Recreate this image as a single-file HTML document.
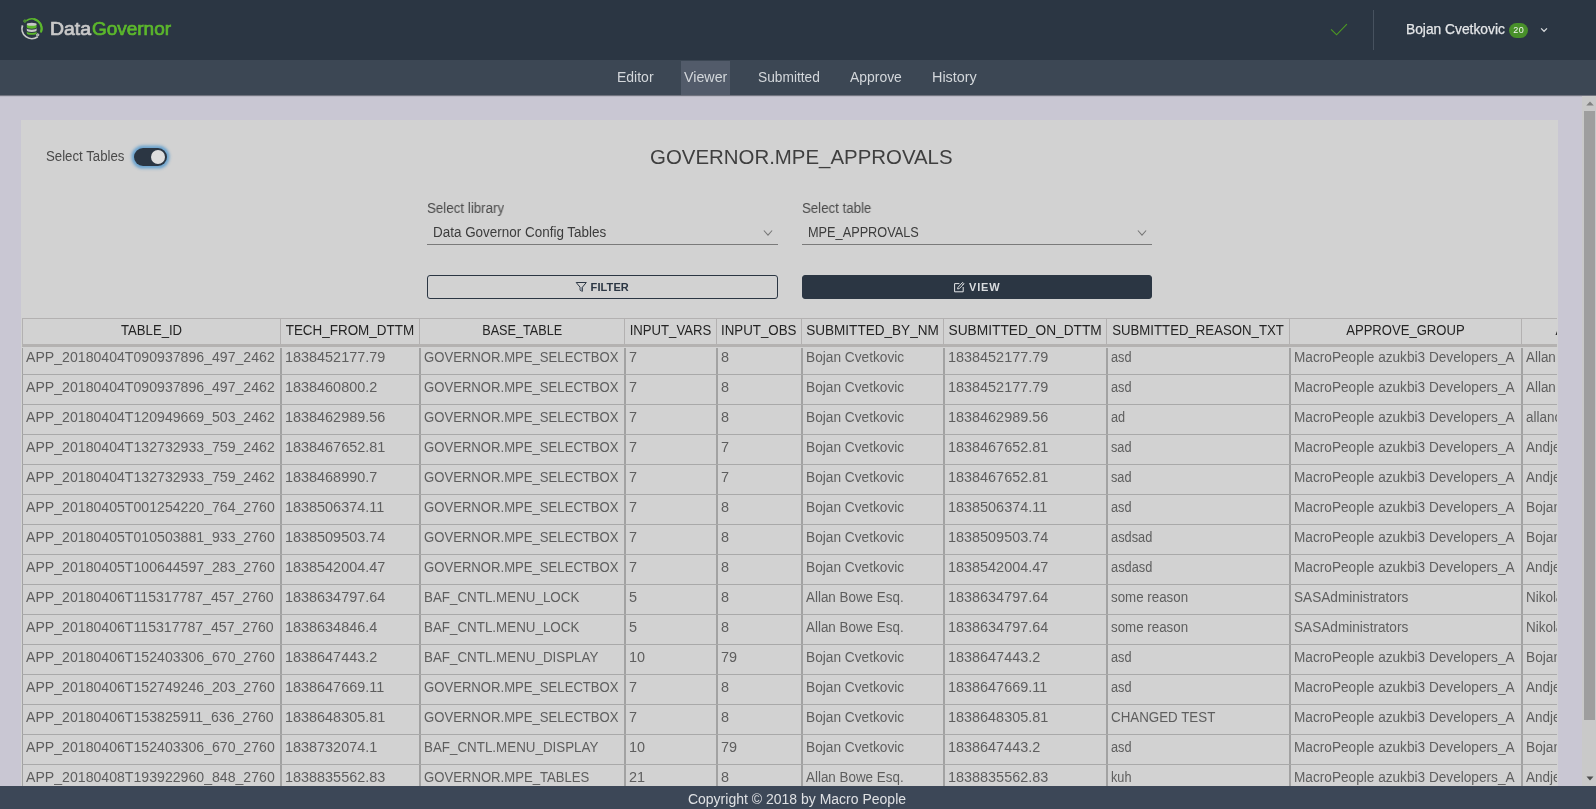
<!DOCTYPE html>
<html lang="en">
<head>
<meta charset="utf-8">
<title>DataGovernor - Viewer</title>
<style>
*{box-sizing:border-box}
html,body{margin:0;padding:0}
body{width:1596px;height:809px;overflow:hidden;position:relative;background:#c9c7d3;font-family:"Liberation Sans",sans-serif;font-size:14px;color:#565656}
.abs{position:absolute}
body>*{will-change:transform}
/* header */
#hdr{position:absolute;left:0;top:0;width:1596px;height:60px;background:#2b3643}
#logo{position:absolute;left:16px;top:12px;width:40px;height:34px}
#brand{position:absolute;left:50px;top:18px;height:22px;line-height:22px;font-size:18px;font-weight:normal;-webkit-text-stroke:.7px #c9c9c9;white-space:nowrap;color:#c9c9c9}
#brand span{display:inline-block;transform-origin:0 50%}
#brand b{display:inline-block;transform-origin:0 50%;color:#5cb82c;-webkit-text-stroke:.7px #5cb82c;font-weight:normal;position:absolute;left:42.1px;top:0}
#chk{position:absolute;left:1329px;top:20px;width:20px;height:18px}
#vdiv{position:absolute;left:1373px;top:10px;width:1px;height:40px;background:#47525f}
#user{position:absolute;left:1406px;top:20px;height:18px;line-height:18px;font-size:14px;color:#e4e6e8;-webkit-text-stroke:.25px #e4e6e8;white-space:nowrap;transform:scaleX(.985);transform-origin:0 50%}
#badge{position:absolute;left:1509px;top:23px;width:19px;height:15px;border-radius:8px;background:#48902a;color:#f4f4f4;font-size:9px;letter-spacing:.7px;padding-left:.7px;line-height:14px;text-align:center}
#caret{position:absolute;left:1539px;top:25px;width:10px;height:10px}
/* subnav */
#sub{position:absolute;left:0;top:60px;width:1596px;height:35px;background:#3c4754;box-shadow:0 1px 1px rgba(40,48,58,.55)}
#sub a{position:absolute;top:0;height:35px;line-height:35px;font-size:14px;color:#d3d7db;text-decoration:none;white-space:nowrap;transform-origin:0 50%}
#sub .act{position:absolute;left:681px;top:1px;width:49px;height:34px;background:#525b6a}
/* card */
#card{position:absolute;left:21px;top:120px;width:1537px;height:700px;background:#d2d2d2;overflow:hidden}
#card .lbl{position:absolute;white-space:nowrap;color:#4a4a4a;font-size:14px;line-height:18px;transform-origin:0 50%}
#title{position:absolute;left:650px;top:143px;font-size:20px;line-height:28px;color:#3f3f3f;white-space:nowrap;transform:scaleX(1.021);transform-origin:0 50%}
.sel{position:absolute;height:24px;border-bottom:1px solid #7a7a7a;font-size:14px;line-height:22px;color:#3c3c3c;padding-left:6px;white-space:nowrap}
.sel span{display:inline-block;transform-origin:0 50%}
.sel svg{position:absolute;right:5px;top:8px;width:10px;height:8px}
.fl{position:absolute;color:#4a4a4a;line-height:18px;white-space:nowrap;transform-origin:0 50%}
.btn{position:absolute;height:24px;border-radius:3px;font-size:11px;font-weight:bold;line-height:22px;white-space:nowrap}
.btn svg{position:absolute;top:5px;width:12px;height:12px}
.btn span{position:absolute;top:0}
#bf{border:1px solid #2b3643;color:#2b3643}
#bv{background:#2b3643;border:1px solid #2b3643;color:#d9dcdf}
/* toggle */
#tog{position:absolute;left:134px;top:148px;width:33px;height:18px;border-radius:9px;background:#2b3643;box-shadow:0 0 3px 2.5px rgba(96,158,206,.9)}
#tog i{position:absolute;left:17px;top:2px;width:14px;height:14px;border-radius:7px;background:#dedede}
/* table */
#tbl{position:absolute;left:1px;top:198px;width:1535px;height:500px;overflow:hidden;font-size:14px}
#thead{position:absolute;left:0;top:0;width:1700px;height:29px;border-top:1px solid #b3b1b1}
.hc{position:absolute;top:0;height:25px;border-left:1px solid #b3b1b1;text-align:center;line-height:23px;color:#242424;white-space:nowrap;overflow:hidden}
.hc span{display:inline-block;transform-origin:50% 50%}
#hline{position:absolute;left:0;top:25px;width:1700px;height:3px;background:#b4b2b1}
.r{position:absolute;left:0;width:1700px;height:30px;border-bottom:1px solid #a9a9a9}
.c{position:absolute;top:0;height:29px;border-left:2px solid #a2a2a2;padding-left:3px;line-height:25px;color:#5e5e5e;white-space:nowrap;overflow:hidden}
.c:first-child{border-left-width:1px}
.r0 .c{top:3px;height:26px;line-height:19px}
.c span{display:inline-block;transform-origin:0 50%}
/* scrollbar */
#sbar{position:absolute;left:1582px;top:96px;width:14px;height:690px;background:#c9c9c9}
#sbar .th{position:absolute;left:2px;top:15px;width:11px;height:609px;background:#9e9e9e}
#sbar svg{position:absolute;left:3.5px;width:8px;height:5px}
/* footer */
#ftr{position:absolute;left:0;top:786px;width:1596px;height:23px;background:#3c4757;color:#dfe1e4;font-size:14px;line-height:26px;text-align:center;white-space:nowrap;padding-right:2px;overflow:hidden}
</style>
</head>
<body>
<div id="hdr">
  <svg id="logo" viewBox="0 0 40 34">
    <path d="M10.40 8.67 A9.75 9.75 0 0 1 25.12 19.76" fill="none" stroke="#5cb82c" stroke-width="1.6"/>
    <path d="M18.37 7.33 A9.75 9.75 0 0 1 25.12 19.76" fill="none" stroke="#5cb82c" stroke-width="2.1" stroke-linecap="round"/>
    <path d="M6.55 13.36 A9.9 9.9 0 0 0 21.67 24.76" fill="none" stroke="#c9c9c9" stroke-width="1.8"/>
    <circle cx="8.9" cy="9.1" r="1.15" fill="#2b3643" stroke="#5cb82c" stroke-width="1"/>
    <circle cx="21.7" cy="22.9" r="1.15" fill="#8b9097" stroke="#c9c9c9" stroke-width="1"/>
    <path d="M10.8 19.4 V21.2 A4.9 1.6 0 0 0 20.6 21.2 V19.4 Z" fill="#5cb82c"/>
    <ellipse cx="15.7" cy="19.3" rx="4.9" ry="1.6" fill="#2b3643"/>
    <path d="M10.8 16.2 V18.3 A4.9 1.6 0 0 0 20.6 18.3 V16.2 Z" fill="#c9c9c9"/>
    <ellipse cx="15.7" cy="16.1" rx="4.9" ry="1.6" fill="#2b3643"/>
    <path d="M10.8 12.4 V15.1 A4.9 1.6 0 0 0 20.6 15.1 V12.4 Z" fill="#5cb82c"/>
    <ellipse cx="15.7" cy="12.3" rx="4.9" ry="1.5" fill="#c9c9c9"/>
  </svg>
  <div id="brand"><span style="transform:scaleX(1.078)">Data</span><b style="transform:scaleX(1.053)">Governor</b></div>
  <svg id="chk" viewBox="0 0 20 18"><path d="M2.1 9.3 L7.6 14.8 L17.9 4.1" fill="none" stroke="#4d9a22" stroke-width="1.15"/></svg>
  <div id="vdiv"></div>
  <div id="user">Bojan Cvetkovic</div>
  <div id="badge">20</div>
  <svg id="caret" viewBox="0 0 10 10"><path d="M2.1 3.4 L5.05 6.3 L8 3.4" fill="none" stroke="#d9dcdf" stroke-width="1.2"/></svg>
</div>
<div id="sub">
  <div class="act"></div>
  <a style="left:617px">Editor</a>
  <a style="left:684px;transform:scaleX(1.018)">Viewer</a>
  <a style="left:757.5px;transform:scaleX(.982)">Submitted</a>
  <a style="left:850px;transform:scaleX(.994)">Approve</a>
  <a style="left:932px;transform:scaleX(1.028)">History</a>
</div>
<div id="card">
  <div class="lbl" style="left:25px;top:27px;transform:scaleX(.945)">Select Tables</div>
</div>
<div id="tog"><i></i></div>
<div id="title">GOVERNOR.MPE_APPROVALS</div>
<div class="fl" style="left:427px;top:199px;transform:scaleX(.953)">Select library</div>
<div class="sel" style="left:427px;top:221px;width:351px"><span style="transform:scaleX(.961)">Data Governor Config Tables</span><svg viewBox="0 0 10 8"><path d="M0.9 1.5 L5 6.2 L9.1 1.5" fill="none" stroke="#777" stroke-width="1.05"/></svg></div>
<div class="fl" style="left:802px;top:199px;transform:scaleX(.948)">Select table</div>
<div class="sel" style="left:802px;top:221px;width:350px"><span style="transform:scaleX(.909)">MPE_APPROVALS</span><svg viewBox="0 0 10 8"><path d="M0.9 1.5 L5 6.2 L9.1 1.5" fill="none" stroke="#777" stroke-width="1.05"/></svg></div>
<div class="btn" id="bf" style="left:427px;top:275px;width:351px"><svg style="left:147px;top:4px" viewBox="0 0 12 12"><path d="M1.2 2.5 H11.3 L7.4 7.2 V11.3 L5.1 10.2 V7.2 Z" fill="none" stroke="#2b3643" stroke-width="1"/><path d="M5.4 7.2 H7.1 V10.8 L5.4 10 Z" fill="#8d96a3"/></svg><span style="left:162.6px;letter-spacing:.1px">FILTER</span></div>
<div class="btn" id="bv" style="left:802px;top:275px;width:350px"><svg style="left:150px" viewBox="0 0 12 12"><path d="M10.2 6 V10.8 H1.6 V2.6 H6.4" fill="none" stroke="#e4e6e8" stroke-width="1"/><path d="M4.6 8 L5 6.3 L9.6 1.4 L11 2.8 L6.3 7.6 Z M8.7 2.4 L10 3.8" fill="none" stroke="#e4e6e8" stroke-width=".9"/></svg><span style="left:166px;letter-spacing:.8px">VIEW</span></div>
<div id="card2" class="abs" style="left:21px;top:120px;width:1537px;height:666px;overflow:hidden;pointer-events:none">
<div id="tbl">
  <div id="thead">
<div class="hc" style="left:0px;width:258px"><span style="transform:scaleX(0.9384)">TABLE_ID</span></div>
<div class="hc" style="left:258px;width:139px"><span style="transform:scaleX(0.9601)">TECH_FROM_DTTM</span></div>
<div class="hc" style="left:397px;width:205px"><span style="transform:scaleX(0.9052)">BASE_TABLE</span></div>
<div class="hc" style="left:602px;width:92px"><span style="transform:scaleX(0.9391)">INPUT_VARS</span></div>
<div class="hc" style="left:694px;width:85px"><span style="transform:scaleX(0.9514)">INPUT_OBS</span></div>
<div class="hc" style="left:779px;width:142px"><span style="transform:scaleX(0.9685)">SUBMITTED_BY_NM</span></div>
<div class="hc" style="left:921px;width:163px"><span style="transform:scaleX(0.9801)">SUBMITTED_ON_DTTM</span></div>
<div class="hc" style="left:1084px;width:183px"><span style="transform:scaleX(0.9427)">SUBMITTED_REASON_TXT</span></div>
<div class="hc" style="left:1267px;width:232px"><span style="transform:scaleX(0.9334)">APPROVE_GROUP</span></div>
<div class="hc" style="left:1499px;width:194px"><span style="transform:scaleX(0.9489)">APPROVED_BY_NM</span></div>
  <div id="hline"></div>
  </div>
<div class="r r0" style="top:27px"><div class="c" style="left:0px;width:258px"><span style="transform:scaleX(1.0080)">APP_20180404T090937896_497_2462</span></div><div class="c" style="left:258px;width:139px"><span style="transform:scaleX(1.0300)">1838452177.79</span></div><div class="c" style="left:397px;width:205px"><span style="transform:scaleX(0.9367)">GOVERNOR.MPE_SELECTBOX</span></div><div class="c" style="left:602px;width:92px"><span style="transform:scaleX(1.0300)">7</span></div><div class="c" style="left:694px;width:85px"><span style="transform:scaleX(1.0300)">8</span></div><div class="c" style="left:779px;width:142px"><span style="transform:scaleX(0.9785)">Bojan Cvetkovic</span></div><div class="c" style="left:921px;width:163px"><span style="transform:scaleX(1.0300)">1838452177.79</span></div><div class="c" style="left:1084px;width:183px"><span style="transform:scaleX(0.9086)">asd</span></div><div class="c" style="left:1267px;width:232px"><span style="transform:scaleX(0.9740)">MacroPeople azukbi3 Developers_A</span></div><div class="c" style="left:1499px;width:194px"><span style="transform:scaleX(0.9574)">Allan Bowe Esq.</span></div></div>
<div class="r" style="top:57px"><div class="c" style="left:0px;width:258px"><span style="transform:scaleX(1.0080)">APP_20180404T090937896_497_2462</span></div><div class="c" style="left:258px;width:139px"><span style="transform:scaleX(1.0300)">1838460800.2</span></div><div class="c" style="left:397px;width:205px"><span style="transform:scaleX(0.9367)">GOVERNOR.MPE_SELECTBOX</span></div><div class="c" style="left:602px;width:92px"><span style="transform:scaleX(1.0300)">7</span></div><div class="c" style="left:694px;width:85px"><span style="transform:scaleX(1.0300)">8</span></div><div class="c" style="left:779px;width:142px"><span style="transform:scaleX(0.9785)">Bojan Cvetkovic</span></div><div class="c" style="left:921px;width:163px"><span style="transform:scaleX(1.0300)">1838452177.79</span></div><div class="c" style="left:1084px;width:183px"><span style="transform:scaleX(0.9086)">asd</span></div><div class="c" style="left:1267px;width:232px"><span style="transform:scaleX(0.9740)">MacroPeople azukbi3 Developers_A</span></div><div class="c" style="left:1499px;width:194px"><span style="transform:scaleX(0.9574)">Allan Bowe Esq.</span></div></div>
<div class="r" style="top:87px"><div class="c" style="left:0px;width:258px"><span style="transform:scaleX(1.0080)">APP_20180404T120949669_503_2462</span></div><div class="c" style="left:258px;width:139px"><span style="transform:scaleX(1.0300)">1838462989.56</span></div><div class="c" style="left:397px;width:205px"><span style="transform:scaleX(0.9367)">GOVERNOR.MPE_SELECTBOX</span></div><div class="c" style="left:602px;width:92px"><span style="transform:scaleX(1.0300)">7</span></div><div class="c" style="left:694px;width:85px"><span style="transform:scaleX(1.0300)">8</span></div><div class="c" style="left:779px;width:142px"><span style="transform:scaleX(0.9785)">Bojan Cvetkovic</span></div><div class="c" style="left:921px;width:163px"><span style="transform:scaleX(1.0300)">1838462989.56</span></div><div class="c" style="left:1084px;width:183px"><span style="transform:scaleX(0.9100)">ad</span></div><div class="c" style="left:1267px;width:232px"><span style="transform:scaleX(0.9740)">MacroPeople azukbi3 Developers_A</span></div><div class="c" style="left:1499px;width:194px"><span style="transform:scaleX(0.9600)">allanc</span></div></div>
<div class="r" style="top:117px"><div class="c" style="left:0px;width:258px"><span style="transform:scaleX(1.0080)">APP_20180404T132732933_759_2462</span></div><div class="c" style="left:258px;width:139px"><span style="transform:scaleX(1.0300)">1838467652.81</span></div><div class="c" style="left:397px;width:205px"><span style="transform:scaleX(0.9367)">GOVERNOR.MPE_SELECTBOX</span></div><div class="c" style="left:602px;width:92px"><span style="transform:scaleX(1.0300)">7</span></div><div class="c" style="left:694px;width:85px"><span style="transform:scaleX(1.0300)">7</span></div><div class="c" style="left:779px;width:142px"><span style="transform:scaleX(0.9785)">Bojan Cvetkovic</span></div><div class="c" style="left:921px;width:163px"><span style="transform:scaleX(1.0300)">1838467652.81</span></div><div class="c" style="left:1084px;width:183px"><span style="transform:scaleX(0.9100)">sad</span></div><div class="c" style="left:1267px;width:232px"><span style="transform:scaleX(0.9740)">MacroPeople azukbi3 Developers_A</span></div><div class="c" style="left:1499px;width:194px"><span style="transform:scaleX(0.9600)">Andjela Cvetkovic</span></div></div>
<div class="r" style="top:147px"><div class="c" style="left:0px;width:258px"><span style="transform:scaleX(1.0080)">APP_20180404T132732933_759_2462</span></div><div class="c" style="left:258px;width:139px"><span style="transform:scaleX(1.0300)">1838468990.7</span></div><div class="c" style="left:397px;width:205px"><span style="transform:scaleX(0.9367)">GOVERNOR.MPE_SELECTBOX</span></div><div class="c" style="left:602px;width:92px"><span style="transform:scaleX(1.0300)">7</span></div><div class="c" style="left:694px;width:85px"><span style="transform:scaleX(1.0300)">7</span></div><div class="c" style="left:779px;width:142px"><span style="transform:scaleX(0.9785)">Bojan Cvetkovic</span></div><div class="c" style="left:921px;width:163px"><span style="transform:scaleX(1.0300)">1838467652.81</span></div><div class="c" style="left:1084px;width:183px"><span style="transform:scaleX(0.9100)">sad</span></div><div class="c" style="left:1267px;width:232px"><span style="transform:scaleX(0.9740)">MacroPeople azukbi3 Developers_A</span></div><div class="c" style="left:1499px;width:194px"><span style="transform:scaleX(0.9600)">Andjela Cvetkovic</span></div></div>
<div class="r" style="top:177px"><div class="c" style="left:0px;width:258px"><span style="transform:scaleX(1.0080)">APP_20180405T001254220_764_2760</span></div><div class="c" style="left:258px;width:139px"><span style="transform:scaleX(1.0300)">1838506374.11</span></div><div class="c" style="left:397px;width:205px"><span style="transform:scaleX(0.9367)">GOVERNOR.MPE_SELECTBOX</span></div><div class="c" style="left:602px;width:92px"><span style="transform:scaleX(1.0300)">7</span></div><div class="c" style="left:694px;width:85px"><span style="transform:scaleX(1.0300)">8</span></div><div class="c" style="left:779px;width:142px"><span style="transform:scaleX(0.9785)">Bojan Cvetkovic</span></div><div class="c" style="left:921px;width:163px"><span style="transform:scaleX(1.0300)">1838506374.11</span></div><div class="c" style="left:1084px;width:183px"><span style="transform:scaleX(0.9086)">asd</span></div><div class="c" style="left:1267px;width:232px"><span style="transform:scaleX(0.9740)">MacroPeople azukbi3 Developers_A</span></div><div class="c" style="left:1499px;width:194px"><span style="transform:scaleX(0.9785)">Bojan Cvetkovic</span></div></div>
<div class="r" style="top:207px"><div class="c" style="left:0px;width:258px"><span style="transform:scaleX(1.0080)">APP_20180405T010503881_933_2760</span></div><div class="c" style="left:258px;width:139px"><span style="transform:scaleX(1.0300)">1838509503.74</span></div><div class="c" style="left:397px;width:205px"><span style="transform:scaleX(0.9367)">GOVERNOR.MPE_SELECTBOX</span></div><div class="c" style="left:602px;width:92px"><span style="transform:scaleX(1.0300)">7</span></div><div class="c" style="left:694px;width:85px"><span style="transform:scaleX(1.0300)">8</span></div><div class="c" style="left:779px;width:142px"><span style="transform:scaleX(0.9785)">Bojan Cvetkovic</span></div><div class="c" style="left:921px;width:163px"><span style="transform:scaleX(1.0300)">1838509503.74</span></div><div class="c" style="left:1084px;width:183px"><span style="transform:scaleX(0.9152)">asdsad</span></div><div class="c" style="left:1267px;width:232px"><span style="transform:scaleX(0.9740)">MacroPeople azukbi3 Developers_A</span></div><div class="c" style="left:1499px;width:194px"><span style="transform:scaleX(0.9785)">Bojan Cvetkovic</span></div></div>
<div class="r" style="top:237px"><div class="c" style="left:0px;width:258px"><span style="transform:scaleX(1.0080)">APP_20180405T100644597_283_2760</span></div><div class="c" style="left:258px;width:139px"><span style="transform:scaleX(1.0300)">1838542004.47</span></div><div class="c" style="left:397px;width:205px"><span style="transform:scaleX(0.9367)">GOVERNOR.MPE_SELECTBOX</span></div><div class="c" style="left:602px;width:92px"><span style="transform:scaleX(1.0300)">7</span></div><div class="c" style="left:694px;width:85px"><span style="transform:scaleX(1.0300)">8</span></div><div class="c" style="left:779px;width:142px"><span style="transform:scaleX(0.9785)">Bojan Cvetkovic</span></div><div class="c" style="left:921px;width:163px"><span style="transform:scaleX(1.0300)">1838542004.47</span></div><div class="c" style="left:1084px;width:183px"><span style="transform:scaleX(0.9152)">asdasd</span></div><div class="c" style="left:1267px;width:232px"><span style="transform:scaleX(0.9740)">MacroPeople azukbi3 Developers_A</span></div><div class="c" style="left:1499px;width:194px"><span style="transform:scaleX(0.9600)">Andjela Cvetkovic</span></div></div>
<div class="r" style="top:267px"><div class="c" style="left:0px;width:258px"><span style="transform:scaleX(1.0080)">APP_20180406T115317787_457_2760</span></div><div class="c" style="left:258px;width:139px"><span style="transform:scaleX(1.0300)">1838634797.64</span></div><div class="c" style="left:397px;width:205px"><span style="transform:scaleX(0.9552)">BAF_CNTL.MENU_LOCK</span></div><div class="c" style="left:602px;width:92px"><span style="transform:scaleX(1.0300)">5</span></div><div class="c" style="left:694px;width:85px"><span style="transform:scaleX(1.0300)">8</span></div><div class="c" style="left:779px;width:142px"><span style="transform:scaleX(0.9574)">Allan Bowe Esq.</span></div><div class="c" style="left:921px;width:163px"><span style="transform:scaleX(1.0300)">1838634797.64</span></div><div class="c" style="left:1084px;width:183px"><span style="transform:scaleX(0.9519)">some reason</span></div><div class="c" style="left:1267px;width:232px"><span style="transform:scaleX(0.9722)">SASAdministrators</span></div><div class="c" style="left:1499px;width:194px"><span style="transform:scaleX(0.9600)">Nikola Markovic</span></div></div>
<div class="r" style="top:297px"><div class="c" style="left:0px;width:258px"><span style="transform:scaleX(1.0080)">APP_20180406T115317787_457_2760</span></div><div class="c" style="left:258px;width:139px"><span style="transform:scaleX(1.0300)">1838634846.4</span></div><div class="c" style="left:397px;width:205px"><span style="transform:scaleX(0.9552)">BAF_CNTL.MENU_LOCK</span></div><div class="c" style="left:602px;width:92px"><span style="transform:scaleX(1.0300)">5</span></div><div class="c" style="left:694px;width:85px"><span style="transform:scaleX(1.0300)">8</span></div><div class="c" style="left:779px;width:142px"><span style="transform:scaleX(0.9574)">Allan Bowe Esq.</span></div><div class="c" style="left:921px;width:163px"><span style="transform:scaleX(1.0300)">1838634797.64</span></div><div class="c" style="left:1084px;width:183px"><span style="transform:scaleX(0.9519)">some reason</span></div><div class="c" style="left:1267px;width:232px"><span style="transform:scaleX(0.9722)">SASAdministrators</span></div><div class="c" style="left:1499px;width:194px"><span style="transform:scaleX(0.9600)">Nikola Markovic</span></div></div>
<div class="r" style="top:327px"><div class="c" style="left:0px;width:258px"><span style="transform:scaleX(1.0080)">APP_20180406T152403306_670_2760</span></div><div class="c" style="left:258px;width:139px"><span style="transform:scaleX(1.0300)">1838647443.2</span></div><div class="c" style="left:397px;width:205px"><span style="transform:scaleX(0.9552)">BAF_CNTL.MENU_DISPLAY</span></div><div class="c" style="left:602px;width:92px"><span style="transform:scaleX(1.0300)">10</span></div><div class="c" style="left:694px;width:85px"><span style="transform:scaleX(1.0300)">79</span></div><div class="c" style="left:779px;width:142px"><span style="transform:scaleX(0.9785)">Bojan Cvetkovic</span></div><div class="c" style="left:921px;width:163px"><span style="transform:scaleX(1.0300)">1838647443.2</span></div><div class="c" style="left:1084px;width:183px"><span style="transform:scaleX(0.9086)">asd</span></div><div class="c" style="left:1267px;width:232px"><span style="transform:scaleX(0.9740)">MacroPeople azukbi3 Developers_A</span></div><div class="c" style="left:1499px;width:194px"><span style="transform:scaleX(0.9785)">Bojan Cvetkovic</span></div></div>
<div class="r" style="top:357px"><div class="c" style="left:0px;width:258px"><span style="transform:scaleX(1.0080)">APP_20180406T152749246_203_2760</span></div><div class="c" style="left:258px;width:139px"><span style="transform:scaleX(1.0300)">1838647669.11</span></div><div class="c" style="left:397px;width:205px"><span style="transform:scaleX(0.9367)">GOVERNOR.MPE_SELECTBOX</span></div><div class="c" style="left:602px;width:92px"><span style="transform:scaleX(1.0300)">7</span></div><div class="c" style="left:694px;width:85px"><span style="transform:scaleX(1.0300)">8</span></div><div class="c" style="left:779px;width:142px"><span style="transform:scaleX(0.9785)">Bojan Cvetkovic</span></div><div class="c" style="left:921px;width:163px"><span style="transform:scaleX(1.0300)">1838647669.11</span></div><div class="c" style="left:1084px;width:183px"><span style="transform:scaleX(0.9086)">asd</span></div><div class="c" style="left:1267px;width:232px"><span style="transform:scaleX(0.9740)">MacroPeople azukbi3 Developers_A</span></div><div class="c" style="left:1499px;width:194px"><span style="transform:scaleX(0.9600)">Andjela Cvetkovic</span></div></div>
<div class="r" style="top:387px"><div class="c" style="left:0px;width:258px"><span style="transform:scaleX(1.0080)">APP_20180406T153825911_636_2760</span></div><div class="c" style="left:258px;width:139px"><span style="transform:scaleX(1.0300)">1838648305.81</span></div><div class="c" style="left:397px;width:205px"><span style="transform:scaleX(0.9367)">GOVERNOR.MPE_SELECTBOX</span></div><div class="c" style="left:602px;width:92px"><span style="transform:scaleX(1.0300)">7</span></div><div class="c" style="left:694px;width:85px"><span style="transform:scaleX(1.0300)">8</span></div><div class="c" style="left:779px;width:142px"><span style="transform:scaleX(0.9785)">Bojan Cvetkovic</span></div><div class="c" style="left:921px;width:163px"><span style="transform:scaleX(1.0300)">1838648305.81</span></div><div class="c" style="left:1084px;width:183px"><span style="transform:scaleX(0.9531)">CHANGED TEST</span></div><div class="c" style="left:1267px;width:232px"><span style="transform:scaleX(0.9740)">MacroPeople azukbi3 Developers_A</span></div><div class="c" style="left:1499px;width:194px"><span style="transform:scaleX(0.9600)">Andjela Cvetkovic</span></div></div>
<div class="r" style="top:417px"><div class="c" style="left:0px;width:258px"><span style="transform:scaleX(1.0080)">APP_20180406T152403306_670_2760</span></div><div class="c" style="left:258px;width:139px"><span style="transform:scaleX(1.0300)">1838732074.1</span></div><div class="c" style="left:397px;width:205px"><span style="transform:scaleX(0.9552)">BAF_CNTL.MENU_DISPLAY</span></div><div class="c" style="left:602px;width:92px"><span style="transform:scaleX(1.0300)">10</span></div><div class="c" style="left:694px;width:85px"><span style="transform:scaleX(1.0300)">79</span></div><div class="c" style="left:779px;width:142px"><span style="transform:scaleX(0.9785)">Bojan Cvetkovic</span></div><div class="c" style="left:921px;width:163px"><span style="transform:scaleX(1.0300)">1838647443.2</span></div><div class="c" style="left:1084px;width:183px"><span style="transform:scaleX(0.9086)">asd</span></div><div class="c" style="left:1267px;width:232px"><span style="transform:scaleX(0.9740)">MacroPeople azukbi3 Developers_A</span></div><div class="c" style="left:1499px;width:194px"><span style="transform:scaleX(0.9785)">Bojan Cvetkovic</span></div></div>
<div class="r" style="top:447px"><div class="c" style="left:0px;width:258px"><span style="transform:scaleX(1.0080)">APP_20180408T193922960_848_2760</span></div><div class="c" style="left:258px;width:139px"><span style="transform:scaleX(1.0300)">1838835562.83</span></div><div class="c" style="left:397px;width:205px"><span style="transform:scaleX(0.9378)">GOVERNOR.MPE_TABLES</span></div><div class="c" style="left:602px;width:92px"><span style="transform:scaleX(1.0300)">21</span></div><div class="c" style="left:694px;width:85px"><span style="transform:scaleX(1.0300)">8</span></div><div class="c" style="left:779px;width:142px"><span style="transform:scaleX(0.9574)">Allan Bowe Esq.</span></div><div class="c" style="left:921px;width:163px"><span style="transform:scaleX(1.0300)">1838835562.83</span></div><div class="c" style="left:1084px;width:183px"><span style="transform:scaleX(0.9100)">kuh</span></div><div class="c" style="left:1267px;width:232px"><span style="transform:scaleX(0.9740)">MacroPeople azukbi3 Developers_A</span></div><div class="c" style="left:1499px;width:194px"><span style="transform:scaleX(0.9600)">Andjela Cvetkovic</span></div></div>
</div>
</div>
<div id="sbar">
  <svg style="top:5px" viewBox="0 0 9 6"><path d="M0 5.5 L4.5 0.5 L9 5.5 Z" fill="#808080"/></svg>
  <div class="th"></div>
  <svg style="top:680px;left:3.5px;width:8px;height:5px" viewBox="0 0 9 6"><path d="M0.3 0.5 L4.5 5.5 L8.7 0.5 Z" fill="#4d4d4d"/></svg>
</div>
<div id="ftr">Copyright © 2018 by Macro People</div>
</body>
</html>
